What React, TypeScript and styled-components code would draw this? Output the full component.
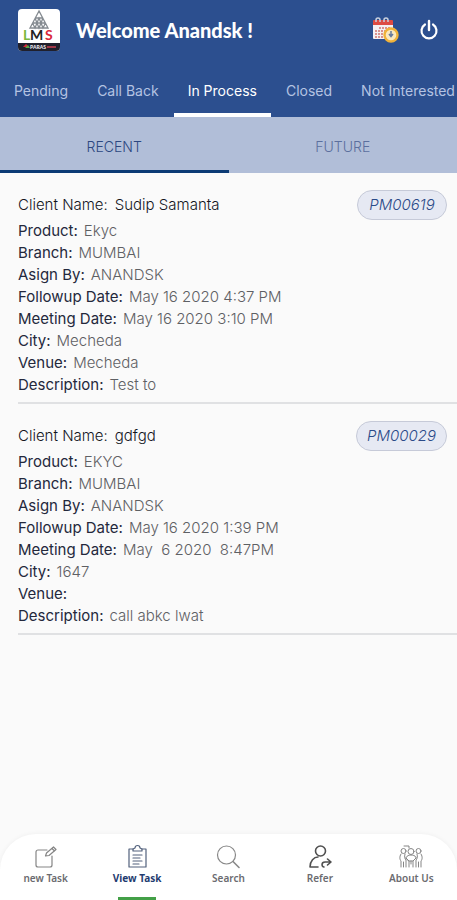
import React, { useState } from "react";
import styled, { createGlobalStyle } from "styled-components";

const GlobalStyle = createGlobalStyle`
  *, *::before, *::after { box-sizing: border-box; }
  body {
    margin: 0;
    background: #fafafa;
    font-family: Inter, "Liberation Sans", sans-serif;
  }
  button { font: inherit; border: 0; margin: 0; padding: 0; background: none; cursor: pointer; }
`;

const Screen = styled.div`
  min-height: 100vh;
  display: flex;
  flex-direction: column;
  overflow-x: hidden;
`;

const Header = styled.header`
  background: #2c4f8f;
`;

const TitleBar = styled.div`
  display: flex;
  align-items: center;
  height: 60px;
  padding: 0 18px;
`;

const Title = styled.h1`
  flex: 1;
  margin: 0 0 0 16px;
  color: #fff;
  font-family: Lato, sans-serif;
  font-size: 20px;
  font-weight: 900;
  line-height: 24px;
  white-space: nowrap;
`;

const IconButton = styled.button`
  display: flex;
  margin-left: 20px;
`;

const StatusTabs = styled.nav`
  display: flex;
  gap: 1px;
  overflow-x: auto;
  scrollbar-width: none;
`;

const StatusTab = styled.button<{ $active: boolean }>`
  flex: none;
  height: 57px;
  padding: 8px 14px 0;
  border-bottom: 4px solid ${(p) => (p.$active ? "#fff" : "transparent")};
  color: ${(p) => (p.$active ? "#fff" : "#b4c3e2")};
  font-size: 14px;
  line-height: 20px;
  white-space: nowrap;

  &:last-child {
    padding-right: 0;
  }
`;

const PeriodTabs = styled.nav`
  display: grid;
  grid-template-columns: 1fr 1fr;
  background: #b1bed8;
`;

const PeriodTab = styled.button<{ $active: boolean }>`
  height: 56px;
  padding-top: 6px;
  border-bottom: 3px solid ${(p) => (p.$active ? "#0c3b75" : "transparent")};
  color: ${(p) => (p.$active ? "#2c4780" : "#5b6f9e")};
  font-size: 14px;
  font-weight: 300;
  line-height: 20px;
`;

const TaskList = styled.main`
  flex: 1;
  padding-left: 18px;
`;

const TaskItem = styled.article`
  padding: 17px 0 6px;
  border-bottom: 2px solid #e0e1e3;
`;

const TaskHead = styled.div`
  display: flex;
  align-items: center;
  justify-content: space-between;
  padding-right: 10px;
`;

const Fields = styled.dl`
  margin: 0;
`;

const Field = styled.div`
  display: flex;
  gap: 6px;
  font-size: 15px;
  line-height: 22px;
`;

const Label = styled.dt`
  color: #24283c;
`;

const Value = styled.dd`
  margin: 0;
  color: #5e6064;
  font-weight: 300;
  white-space: pre-wrap;
`;

const ClientName = styled.h2`
  display: flex;
  gap: 7px;
  margin: 0;
  color: #14161e;
  font-size: 15px;
  font-weight: 300;
  line-height: 22px;
`;

const TaskCode = styled.span`
  min-width: 90px;
  padding: 0 10px;
  border: 1px solid #c6cad8;
  border-radius: 15px;
  background: #e6e9f3;
  color: #2b4a88;
  font-size: 15px;
  font-style: italic;
  font-weight: 300;
  line-height: 28px;
  text-align: center;
`;

const BottomBar = styled.nav`
  position: sticky;
  bottom: 0;
  display: grid;
  grid-template-columns: repeat(5, 1fr);
  border-radius: 36px 36px 0 0;
  background: #fff;
  box-shadow: 0 0 5px rgba(0, 0, 0, 0.05);
`;

const BottomTab = styled.button<{ $active: boolean }>`
  display: flex;
  flex-direction: column;
  align-items: center;
  height: 66px;
  padding-top: 10px;
  color: ${(p) => (p.$active ? "#1f3c70" : "#6b6b70")};
  font-family: "Noto Sans", sans-serif;
  font-size: 10px;
  font-weight: ${(p) => (p.$active ? 700 : 600)};
  line-height: 14px;

  &::after {
    content: "";
    width: 38px;
    height: 3px;
    margin-top: auto;
    background: ${(p) => (p.$active ? "#43a047" : "transparent")};
  }
`;

const Glyph = styled.svg`
  display: block;
  width: 26px;
  height: 26px;
  margin-bottom: 1px;
  fill: none;
  stroke-linecap: round;
  stroke-linejoin: round;
`;

const Logo = () => (
  <svg width="42" height="42" viewBox="0 0 42 42" role="img" aria-label="LMS">
    <rect width="42" height="42" rx="4" fill="#fff" />
    <path d="M0 34h42v4a4 4 0 0 1-4 4H4a4 4 0 0 1-4-4z" fill="#20202c" />
    <g fill="none" stroke="#858b91" strokeWidth="1.3">
      <path d="M21 2 12 19h18zM17 9h8M14.500 14h13M17 9l4 10 4-10M14.500 14 17 19l4-10 4 10 2.500-5" />
    </g>
    <g fontFamily="Lato, sans-serif" fontSize="14" fontWeight="700">
      <text x="5" y="31" fill="#79b83c">L</text>
      <text x="12" y="31" fill="#222">M</text>
      <text x="27" y="31" fill="#d9283b">S</text>
    </g>
    <path d="m5 38 3-3 3 3z" fill="#d9283b" />
    <path d="M7 39h5l-2-3z" fill="#58a846" />
    <text x="12" y="40" fill="#e8e8ee" fontFamily="Lato, sans-serif" fontSize="5" fontWeight="900">PARAS</text>
    <path d="M29 38h9" stroke="#a03848" strokeWidth="2" />
  </svg>
);

const CalendarIcon = () => (
  <svg width="27" height="26" viewBox="0 0 27 26" aria-hidden="true">
    <rect x="1" y="4" width="20" height="18" rx="1" fill="#f4f0f3" />
    <path d="M1 8V4a1 1 0 0 1 1-1h18a1 1 0 0 1 1 1v4z" fill="#dd4b43" />
    <path d="M4 5V3a2 2 0 0 1 4 0v2M12 5V3a2 2 0 0 1 4 0v2" fill="none" stroke="#c9d0de" strokeWidth="1.500" />
    <path d="M7 11h11M3 14h14M3 17h9M3 20h8" stroke="#d9938f" strokeWidth="1.800" strokeDasharray="2 1" />
    <circle cx="19" cy="18" r="6.500" fill="#fbe9bf" stroke="#f0b23a" strokeWidth="2.400" />
    <path d="M19 14v5M17 17l2 2.500 2-2.500" fill="none" stroke="#66799d" strokeWidth="1.500" />
  </svg>
);

const PowerIcon = () => (
  <svg width="20" height="22" viewBox="0 0 20 22" fill="none" stroke="#fff" aria-hidden="true">
    <path d="M6 5.500a7.500 7.500 0 1 0 8 0" strokeWidth="2.200" strokeLinecap="round" />
    <path d="M10 2v9" strokeWidth="2.400" strokeLinecap="round" />
  </svg>
);

const NewTaskIcon = () => (
  <Glyph viewBox="0 0 26 26" stroke="#858585" strokeWidth="1.200" aria-hidden="true">
    <path d="M14 6H5a2 2 0 0 0-2 2v13a2 2 0 0 0 2 2h12a2 2 0 0 0 2-2V12" />
    <path d="m12.500 12 1-3 7-6 2.500 2.500-7 6zM19 4.500 21.500 7" />
  </Glyph>
);

const ViewTaskIcon = () => (
  <Glyph viewBox="0 0 26 26" stroke="#52617c" strokeWidth="1.200" aria-hidden="true">
    <path d="M9 5H5v18h17V5h-4" />
    <path d="M9 7V5l2-1a2.500 2.500 0 0 1 5 0l2 1v2zM9 11h9M9 14h7M9 17h9M9 20h6" />
  </Glyph>
);

const SearchIcon = () => (
  <Glyph viewBox="0 0 26 26" stroke="#888" strokeWidth="1.200" aria-hidden="true">
    <circle cx="11.500" cy="11" r="9" />
    <path d="m18 17.500 6 6" strokeWidth="1.600" />
  </Glyph>
);

const ReferIcon = () => (
  <Glyph viewBox="0 0 26 26" stroke="#505050" strokeWidth="1.600" aria-hidden="true">
    <circle cx="13.500" cy="7" r="5" />
    <path d="M11 13c-4 0-8 4-8 10h8" />
    <path d="M17 23c-2.500 0-3-5 1-5h6M20.500 15l3.500 3-3.500 3" />
  </Glyph>
);

const AboutIcon = () => (
  <Glyph viewBox="0 0 26 26" stroke="#858585" strokeWidth="1" aria-hidden="true">
    <circle cx="13" cy="7.500" r="3" />
    <circle cx="5.500" cy="7" r="2.500" />
    <circle cx="20.500" cy="7" r="2.500" />
    <path d="M6 2h5v2M8 14c0-4 10-4 10 0l-3 3h-4zM8 14l3 3v6M18 14l-3 3v6M3 10c-2 3-1 6 0 7v6M7 10c-1 3 0 5 1 6v7M23 10c2 3 1 6 0 7v6M19 10c1 3 0 5-1 6v7M5.500 18v5M20.500 18v5M13 17v3" />
  </Glyph>
);

const statuses = ["Pending", "Call Back", "In Process", "Closed", "Not Interested"];
const periods = ["RECENT", "FUTURE"];

const tasks = [
  {
    code: "PM00619",
    client: "Sudip Samanta",
    fields: [
      ["Product:", "Ekyc"],
      ["Branch:", "MUMBAI"],
      ["Asign By:", "ANANDSK"],
      ["Followup Date:", "May 16 2020 4:37 PM"],
      ["Meeting Date:", "May 16 2020 3:10 PM"],
      ["City:", "Mecheda"],
      ["Venue:", "Mecheda"],
      ["Description:", "Test to"],
    ],
  },
  {
    code: "PM00029",
    client: "gdfgd",
    fields: [
      ["Product:", "EKYC"],
      ["Branch:", "MUMBAI"],
      ["Asign By:", "ANANDSK"],
      ["Followup Date:", "May 16 2020 1:39 PM"],
      ["Meeting Date:", "May  6 2020  8:47PM"],
      ["City:", "1647"],
      ["Venue:", ""],
      ["Description:", "call abkc lwat"],
    ],
  },
];

const destinations = [
  { name: "new Task", Icon: NewTaskIcon },
  { name: "View Task", Icon: ViewTaskIcon },
  { name: "Search", Icon: SearchIcon },
  { name: "Refer", Icon: ReferIcon },
  { name: "About Us", Icon: AboutIcon },
];

export default function App() {
  const [status, setStatus] = useState("In Process");
  const [period, setPeriod] = useState("RECENT");
  const [page, setPage] = useState("View Task");

  return (
    <Screen>
      <GlobalStyle />
      <Header>
        <TitleBar>
          <Logo />
          <Title>Welcome Anandsk !</Title>
          <IconButton aria-label="Schedule"><CalendarIcon /></IconButton>
          <IconButton aria-label="Log out"><PowerIcon /></IconButton>
        </TitleBar>
        <StatusTabs>
          {statuses.map((s) => (
            <StatusTab key={s} $active={s === status} onClick={() => setStatus(s)}>{s}</StatusTab>
          ))}
        </StatusTabs>
      </Header>
      <PeriodTabs>
        {periods.map((p) => (
          <PeriodTab key={p} $active={p === period} onClick={() => setPeriod(p)}>{p}</PeriodTab>
        ))}
      </PeriodTabs>
      <TaskList>
        {tasks.map((task) => (
          <TaskItem key={task.code}>
            <TaskHead>
              <ClientName><span>Client Name:</span><span>{task.client}</span></ClientName>
              <TaskCode>{task.code}</TaskCode>
            </TaskHead>
            <Fields>
              {task.fields.map(([label, value]) => (
                <Field key={label}>
                  <Label>{label}</Label>
                  <Value>{value}</Value>
                </Field>
              ))}
            </Fields>
          </TaskItem>
        ))}
      </TaskList>
      <BottomBar>
        {destinations.map(({ name, Icon }) => (
          <BottomTab key={name} $active={name === page} onClick={() => setPage(name)}>
            <Icon />
            {name}
          </BottomTab>
        ))}
      </BottomBar>
    </Screen>
  );
}
